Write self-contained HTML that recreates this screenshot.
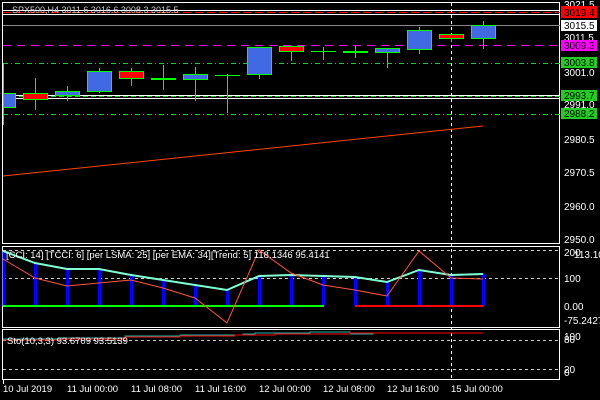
<!DOCTYPE html>
<html><head><style>
body{margin:0;background:#000;width:600px;height:400px;overflow:hidden}
svg{display:block;font-family:"Liberation Sans",sans-serif;font-size:10px}
</style></head><body>
<svg width="600" height="400" viewBox="0 0 600 400" xmlns="http://www.w3.org/2000/svg">
<rect width="600" height="400" fill="#000"/>
<!-- frames -->
<g fill="none" stroke="#fff" stroke-width="1">
<rect x="2.5" y="2.5" width="557" height="241"/>
<rect x="2.5" y="246.5" width="557" height="81"/>
<rect x="2.5" y="329.5" width="557" height="50"/>
</g>
<!-- horizontal lines main -->
<line x1="3" y1="10.5" x2="560" y2="10.5" stroke="#fff"/>
<line x1="3" y1="12.5" x2="560" y2="12.5" stroke="#f00" stroke-dasharray="8,4"/>
<line x1="3" y1="14.5" x2="560" y2="14.5" stroke="#fff"/>
<line x1="3" y1="25.5" x2="560" y2="25.5" stroke="#888"/>
<line x1="3" y1="45.5" x2="560" y2="45.5" stroke="#f0f" stroke-dasharray="8,6"/>
<line x1="3" y1="63.5" x2="560" y2="63.5" stroke="#2c2" stroke-dasharray="5,3,1,3"/>
<line x1="3" y1="95.5" x2="560" y2="95.5" stroke="#fff"/>
<line x1="3" y1="96.5" x2="560" y2="96.5" stroke="#2c2" stroke-dasharray="5,3"/>
<line x1="3" y1="98.5" x2="560" y2="98.5" stroke="#fff"/>
<line x1="3" y1="114.5" x2="560" y2="114.5" stroke="#2c2" stroke-dasharray="5,3,1,3"/>
<line x1="451.5" y1="3" x2="451.5" y2="380" stroke="#fff" stroke-dasharray="3,3"/>
<line x1="3" y1="176" x2="483" y2="126" stroke="#f40"/>
<!-- candles -->
<g stroke="#0f0" stroke-width="1">
<line x1="3.5" y1="63" x2="3.5" y2="125"/><rect x="3.5" y="93.5" width="12" height="14" fill="#4169e1"/>
<line x1="35.5" y1="78" x2="35.5" y2="110"/><rect x="23.5" y="93.5" width="24" height="6" fill="#f00"/>
<line x1="67.5" y1="86" x2="67.5" y2="101"/><rect x="55.5" y="91.5" width="24" height="4" fill="#4169e1"/>
<line x1="99.5" y1="68" x2="99.5" y2="93"/><rect x="87.5" y="71.5" width="24" height="20" fill="#4169e1"/>
<line x1="131.5" y1="68" x2="131.5" y2="86"/><rect x="119.5" y="71.5" width="24" height="7" fill="#f00"/>
<line x1="163.5" y1="65" x2="163.5" y2="90"/><rect x="151.5" y="78.5" width="24" height="1" fill="#0f0"/>
<line x1="195.5" y1="67" x2="195.5" y2="101"/><rect x="183.5" y="74.5" width="24" height="5" fill="#4169e1"/>
<line x1="227.5" y1="74" x2="227.5" y2="113"/><line x1="215" y1="75.5" x2="240" y2="75.5"/>
<line x1="259.5" y1="68" x2="259.5" y2="79"/><rect x="247.5" y="47.5" width="24" height="27" fill="#4169e1"/>
<line x1="291.5" y1="51" x2="291.5" y2="61"/><rect x="279.5" y="46.5" width="24" height="5" fill="#f00"/>
<line x1="323.5" y1="47" x2="323.5" y2="60"/><line x1="311" y1="51.5" x2="336" y2="51.5"/>
<line x1="355.5" y1="45" x2="355.5" y2="58"/><rect x="343.5" y="51.5" width="24" height="1" fill="#0f0"/>
<line x1="387.5" y1="52" x2="387.5" y2="68"/><rect x="375.5" y="48.5" width="24" height="4" fill="#4169e1"/>
<line x1="419.5" y1="27" x2="419.5" y2="54"/><rect x="407.5" y="30.5" width="24" height="19" fill="#4169e1"/>
<line x1="451.5" y1="38" x2="451.5" y2="42"/><rect x="439.5" y="34.5" width="24" height="4" fill="#f00"/>
<line x1="483.5" y1="21" x2="483.5" y2="49"/><rect x="471.5" y="25.5" width="24" height="13" fill="#4169e1"/>
</g>
<text x="12" y="13" fill="#ccc" font-size="9">SPX500,H4  3011.6 3016.6 3008.3 3015.5</text>
<!-- price axis -->
<g fill="#fff" font-size="10">
<text x="564" y="8">3021.5</text>
<rect x="561" y="6" width="36" height="12" fill="#f00"/><text x="564" y="16" fill="#000">3019.4</text>
<rect x="561" y="20" width="36" height="11" fill="#fff"/><text x="564" y="29" fill="#000">3015.5</text>
<text x="564" y="41">3011.5</text>
<rect x="561" y="40" width="36" height="11" fill="#f0f"/><text x="564" y="49" fill="#000">3009.3</text>
<rect x="561" y="57" width="36" height="11" fill="#2c2"/><text x="564" y="66" fill="#000">3003.8</text>
<text x="564" y="76">3001.0</text>
<rect x="561" y="90" width="36" height="11" fill="#2c2"/><text x="564" y="99" fill="#000">2993.7</text>
<text x="564" y="108">2991.0</text>
<rect x="561" y="108" width="36" height="11" fill="#2c2"/><text x="564" y="117" fill="#000">2988.2</text>
<text x="564" y="143">2980.5</text>
<text x="564" y="176">2970.5</text>
<text x="564" y="210">2960.0</text>
<text x="564" y="243">2950.0</text>
<text x="564" y="256">200</text><text x="574" y="258">113.1068</text>
<text x="564" y="282">100</text>
<text x="564" y="310">0.00</text>
<text x="564" y="324">-75.2427</text>
<text x="564" y="340">100</text><text x="564" y="343">80</text>
<text x="564" y="373">20</text><text x="564" y="376">0</text>
</g>
<!-- CCI panel -->
<line x1="3" y1="250.5" x2="560" y2="250.5" stroke="#ccc" stroke-dasharray="3,3"/>
<line x1="3" y1="278.5" x2="560" y2="278.5" stroke="#ccc" stroke-dasharray="3,3"/>
<g stroke="#00f" stroke-width="3">
<line x1="4" y1="306" x2="4" y2="251"/><line x1="35.5" y1="306" x2="35.5" y2="263"/><line x1="67.5" y1="306" x2="67.5" y2="269"/><line x1="99.5" y1="306" x2="99.5" y2="269"/><line x1="131.5" y1="306" x2="131.5" y2="275"/><line x1="163.5" y1="306" x2="163.5" y2="280"/><line x1="195.5" y1="306" x2="195.5" y2="285"/><line x1="227.5" y1="306" x2="227.5" y2="290"/><line x1="259.5" y1="306" x2="259.5" y2="276"/><line x1="291.5" y1="306" x2="291.5" y2="275"/><line x1="323.5" y1="306" x2="323.5" y2="276"/><line x1="355.5" y1="306" x2="355.5" y2="277"/><line x1="387.5" y1="306" x2="387.5" y2="282"/><line x1="419.5" y1="306" x2="419.5" y2="270"/><line x1="451.5" y1="306" x2="451.5" y2="275"/><line x1="483.5" y1="306" x2="483.5" y2="274"/>
</g>
<line x1="3" y1="306" x2="324" y2="306" stroke="#0f0" stroke-width="2"/>
<line x1="355" y1="306" x2="484" y2="306" stroke="#f00" stroke-width="2"/>
<polyline fill="none" stroke="#7fffd4" stroke-width="2" points="3,251 35,263 67,269 99,269 131,275 163,280 195,285 227,290 259,276 291,275 323,276 355,277 387,282 419,270 451,275 483,274"/>
<polyline fill="none" stroke="#f54" stroke-width="1" points="3,259 35,278 67,286 99,283 131,280 163,288 195,298 227,323 259,250 291,273 323,285 355,290 387,296 419,251 451,278 483,279"/>
<text x="6" y="258" fill="#fff" font-size="9.5">[CCI: 14] [TCCI: 6] [per LSMA: 25] [per EMA: 34][Trend: 5]  118.1346 95.4141</text>
<!-- Sto panel -->
<line x1="3" y1="340.5" x2="560" y2="340.5" stroke="#ccc" stroke-dasharray="3,3"/>
<line x1="3" y1="369.5" x2="560" y2="369.5" stroke="#ccc" stroke-dasharray="3,3"/>
<polyline fill="none" stroke="#20b2aa" points="3,339 60,339 60,338 125,338 125,336 180,336 180,335 243,335 243,334 255,334 255,333 310,333 310,332 350,332 350,334 373,334 373,333 403,333 403,333 483,333"/>
<polyline fill="none" stroke="#f00" points="3,340 60,340 60,339 125,339 125,337 180,337 180,336 235,336 235,335 275,335 275,334 350,334 350,333 483,333"/>
<text x="7" y="344" fill="#fff" font-size="9.5">Sto(10,3,3) 93.6709 93.5139</text>
<!-- time axis -->
<g fill="#fff" font-size="9.5">
<line x1="3.5" y1="380" x2="3.5" y2="384" stroke="#fff"/>
<text x="3" y="392">10 Jul 2019</text>
<text x="67" y="392">11 Jul 00:00</text>
<text x="131" y="392">11 Jul 08:00</text>
<text x="195" y="392">11 Jul 16:00</text>
<text x="259" y="392">12 Jul 00:00</text>
<text x="323" y="392">12 Jul 08:00</text>
<text x="387" y="392">12 Jul 16:00</text>
<text x="451" y="392">15 Jul 00:00</text>
</g>
</svg>
</body></html>
